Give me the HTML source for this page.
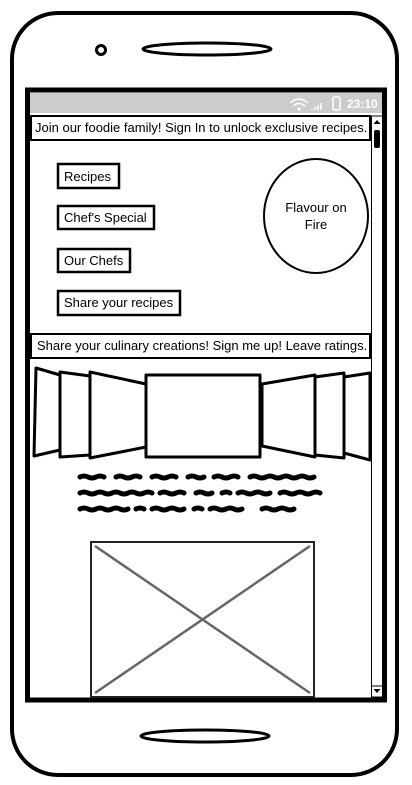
<!DOCTYPE html>
<html><head><meta charset="utf-8"><style>
html,body{margin:0;padding:0;background:#fff;width:412px;height:785px;overflow:hidden}
svg{display:block}
text{font-family:"Liberation Sans",sans-serif;font-size:13px;fill:#000}
</style></head><body>
<svg width="412" height="785" viewBox="0 0 412 785" xmlns="http://www.w3.org/2000/svg">
<rect x="12" y="13" width="385" height="762" rx="46" fill="#fff" stroke="#000" stroke-width="4"/>
<circle cx="101" cy="50" r="4.5" fill="none" stroke="#000" stroke-width="3"/>
<ellipse cx="207" cy="49" rx="64" ry="6" fill="none" stroke="#000" stroke-width="3"/>
<ellipse cx="205" cy="736" rx="64" ry="6" fill="none" stroke="#000" stroke-width="3"/>
<rect x="27.5" y="90" width="357" height="610" fill="#fff" stroke="#000" stroke-width="5"/>
<rect x="30" y="93" width="352" height="20" fill="#cccccc"/>
<text x="347" y="108" style="fill:#fff;font-size:12px;font-weight:bold">23:10</text>
<path d="M290 103 q9 -8 18 0 M293 106 q6 -5 12 0" stroke="#fff" stroke-width="1.5" fill="none"/>
<circle cx="299" cy="109" r="1.5" fill="#fff"/>
<path d="M312 110v-1M315 110v-3M318 110v-5M321 110v-7" stroke="#fff" stroke-width="1.5"/>
<rect x="333" y="97" width="7" height="13" rx="1.5" fill="none" stroke="#fff" stroke-width="1.5"/>
<rect x="31" y="116" width="339" height="24" fill="#fff" stroke="#000" stroke-width="2"/>
<text x="35" y="132">Join our foodie family! Sign In to unlock exclusive recipes.</text>
<rect x="371.5" y="116" width="11" height="581" fill="#fff" stroke="#000" stroke-width="1"/>
<path d="M373.5 124h7l-3.5 -4z" fill="#000"/>
<rect x="374" y="130" width="6" height="18" rx="2" fill="#000"/>
<path d="M373.5 689h7l-3.5 4z" fill="#000"/>
<line x1="372" y1="686" x2="382" y2="686" stroke="#000"/>
<g fill="#fff" stroke="#000" stroke-width="2.5">
<rect x="58" y="164" width="61" height="24"/>
<rect x="58" y="206" width="96" height="23"/>
<rect x="58" y="249" width="72" height="23"/>
<rect x="58" y="291" width="122" height="24"/>
</g>
<text x="64" y="181">Recipes</text>
<text x="64" y="222">Chef's Special</text>
<text x="64" y="265">Our Chefs</text>
<text x="64" y="307">Share your recipes</text>
<ellipse cx="316" cy="216" rx="52" ry="57" fill="#fff" stroke="#000" stroke-width="2"/>
<text x="316" y="212" text-anchor="middle">Flavour on</text>
<text x="316" y="229" text-anchor="middle">Fire</text>
<rect x="31" y="334" width="339" height="24" fill="#fff" stroke="#000" stroke-width="2"/>
<text x="37" y="350">Share your culinary creations! Sign me up! Leave ratings.</text>
<g fill="#fff" stroke="#000" stroke-width="3" stroke-linejoin="round">
<path d="M36 368 L60 375 L60 450 L34 456 Z"/>
<path d="M60 372 L90 376 L90 455 L60 457 Z"/>
<path d="M90 372 L146 384 L146 447 L90 458 Z"/>
<path d="M262 384 L315 375 L315 457 L262 446 Z"/>
<path d="M315 377 L344 373 L344 458 L315 455 Z"/>
<path d="M344 377 L370 373 L370 460 L344 453 Z"/>
<rect x="146" y="375" width="114" height="82"/>
</g>
<g stroke="#000" stroke-width="5" fill="none" stroke-linecap="round">
<path d="M80 477 q4 -2 8 0 t8 0 t8 0 M116 477 q4 -2 8 0 t8 0 t8 0 M152 477 q4 -2 8 0 t8 0 t8 0 M188 477 q4 -2 8 0 t8 0 M214 477 q4 -2 8 0 t8 0 t8 0 M250 477 q4 -2 8 0 t8 0 t8 0 t8 0 t8 0 t8 0 t8 0 t8 0"/>
<path d="M80 493 q4 -2 8 0 t8 0 t8 0 t8 0 t8 0 t8 0 t8 0 t8 0 t8 0 M160 493 q4 -2 8 0 t8 0 t8 0 M196 493 q4 -2 8 0 t8 0 M222 493 q4 -2 8 0 M238 493 q4 -2 8 0 t8 0 t8 0 t8 0 M280 493 q4 -2 8 0 t8 0 t8 0 t8 0 t8 0"/>
<path d="M80 509 q4 -2 8 0 t8 0 t8 0 t8 0 t8 0 t8 0 M136 509 q4 -2 8 0 M152 509 q4 -2 8 0 t8 0 t8 0 t8 0 M194 509 q4 -2 8 0 M210 509 q4 -2 8 0 t8 0 t8 0 t8 0 M262 509 q4 -2 8 0 t8 0 t8 0 t8 0"/>
</g>
<rect x="91" y="542" width="223" height="155" fill="#fff" stroke="#222" stroke-width="2"/>
<path d="M95 546L310 693M310 546L95 693" stroke="#666" stroke-width="2.5"/>
</svg>
</body></html>
